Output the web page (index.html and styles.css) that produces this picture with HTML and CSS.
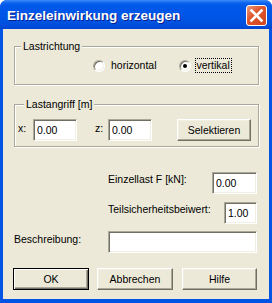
FILE: index.html
```html
<!DOCTYPE html>
<html lang="de">
<head>
  <meta charset="UTF-8">
  <title>Einzeleinwirkung erzeugen</title>
  <link rel="stylesheet" href="styles.css">
</head>
<body>

  <div class="window">
    <div class="titlebar">
      <span class="title">Einzeleinwirkung erzeugen</span>
      <span class="close">
        <svg width="19" height="19" viewBox="0 0 19 19">
          <path d="M4.5 4.5 L14.5 14.5 M14.5 4.5 L4.5 14.5" stroke="#fff" stroke-width="2.6" stroke-linecap="square"/>
        </svg>
      </span>
    </div>

    <div class="content">
      <fieldset class="group group-dir">
        <legend>Lastrichtung</legend>
        <div class="radios">
          <label class="radio"><span class="dot"></span><span class="cap">horizontal</span></label>
          <label class="radio checked"><span class="dot"></span><span class="cap focus">vertikal</span></label>
        </div>
      </fieldset>

      <fieldset class="group group-pos">
        <legend>Lastangriff [m]</legend>
        <div class="pos-row">
          <span class="lbl lbl-x">x:</span>
          <input class="edit w-pos" type="text" value="0.00">
          <span class="lbl lbl-z">z:</span>
          <input class="edit w-pos" type="text" value="0.00">
          <button class="btn btn-sel">Selektieren</button>
        </div>
      </fieldset>

      <div class="row row-last">
        <label class="lbl">Einzellast F [kN]:</label>
        <input class="edit w-last" type="text" value="0.00">
      </div>
      <div class="row row-safe">
        <label class="lbl">Teilsicherheitsbeiwert:</label>
        <input class="edit w-safe" type="text" value="1.00">
      </div>
      <div class="row row-desc">
        <label class="lbl">Beschreibung:</label>
        <input class="edit w-desc" type="text" value="">
      </div>

      <div class="buttons">
        <button class="btn btn-default">OK</button>
        <button class="btn">Abbrechen</button>
        <button class="btn btn-help">Hilfe</button>
      </div>
    </div>
  </div>

</body>
</html>
```

FILE: styles.css
```css
* { box-sizing: border-box; }
html, body { margin: 0; background: #fff; }
body { font-family: "Liberation Sans", Arial, sans-serif; font-size: 10.5px; line-height: 13px; color: #000; }

.window { width: 272px; height: 303px; display: flex; flex-direction: column; background: #0054e3; border-radius: 7px 7px 0 0; overflow: hidden; }

.titlebar { height: 29px; flex: none; display: flex; align-items: center; justify-content: space-between; padding: 2px 5px 0 7px;
  background: linear-gradient(#3d8ef8 0, #0b62ee 3px, #0058ea 6px, #0055e5 18px, #004fdc 25px, #0045d2 29px); }
.title { color: #fff; font-weight: bold; font-size: 13.5px; line-height: 16px; text-shadow: 1px 1px 0 #0a1e8c; }
.close { width: 21px; height: 21px; display: flex; align-items: center; justify-content: center; border: 1px solid #fff; border-radius: 3px;
  background: linear-gradient(135deg, #eb9a7c 0, #e0582f 40%, #cf441c 100%); }
.close svg { display: block; }

.content { flex: 1; margin: 0 3px 4px 3px; background: #ece9d8; padding: 0 10px 0 11px; }

.group { margin: 0; padding: 0; min-width: 0; border: 1px solid #aca899; box-shadow: inset 1px 1px #fff, 1px 1px #fff; }
.group legend { margin-left: 6px; padding: 0 2px; background: #ece9d8; line-height: 13px; }
.group-dir { margin-top: 11px; padding: 5px 0 11px 0; }
.group-pos { margin-top: 13px; padding: 8px 0 5px 3px; }

.radios { display: flex; align-items: center; padding-left: 78px; gap: 20px; }
.radio { display: flex; align-items: center; gap: 4px; }
.dot { position: relative; width: 12px; height: 12px; border-radius: 50%; background: #fff; border: 1px solid; border-color: #aca899 #fff #fff #aca899;
  box-shadow: inset 1px 1px #716f64, inset -1px -1px #f1efe2; }
.checked .dot::after { content: ""; position: absolute; left: 3px; top: 3px; width: 4px; height: 4px; border-radius: 50%; background: #000; }
.cap { padding: 0 1px; border: 1px dotted transparent; }
.cap.focus { border-color: #000; }

.pos-row { display: flex; align-items: flex-start; }
.lbl { display: block; }
.pos-row .lbl { padding-top: 3px; }
.lbl-x { width: 15px; }
.lbl-z { width: 13px; margin-left: 18px; }

.edit { height: 22px; padding: 0 3px; font: inherit; color: #000; background: #fff; outline: none;
  border: 1px solid; border-color: #aca899 #fff #fff #aca899; box-shadow: inset 1px 1px #716f64, inset -1px -1px #f1efe2; }
.w-pos { width: 44px; }
.w-last { width: 45px; }
.w-safe { width: 33px; }
.w-desc { width: 149px; }

.btn { height: 22px; padding: 0; font: inherit; color: #000; background: #ece9d8; text-align: center;
  border: 1px solid; border-color: #fff #716f64 #716f64 #fff; box-shadow: inset -1px -1px #aca899, inset 1px 1px #f1efe2; }
.btn-sel { width: 74px; margin-left: 25px; }
.btn-default { border-color: #000; box-shadow: inset 1px 1px #fff, inset -1px -1px #716f64, inset -2px -2px #aca899; }

.row { display: flex; align-items: flex-start; padding-right: 2px; }
.row .lbl { flex: 1; padding-top: 1px; }
.row-last { margin-top: 25px; padding-left: 94px; }
.row-safe { margin-top: 8px; padding-left: 94px; }
.row-desc { margin-top: 7px; }
.row-desc .lbl { padding-top: 2px; }

.buttons { display: flex; gap: 8px; margin: 15px 0 0 -1px; }
.buttons .btn { width: 76px; }
.buttons .btn-help { width: 75px; margin-left: 1px; }
```
